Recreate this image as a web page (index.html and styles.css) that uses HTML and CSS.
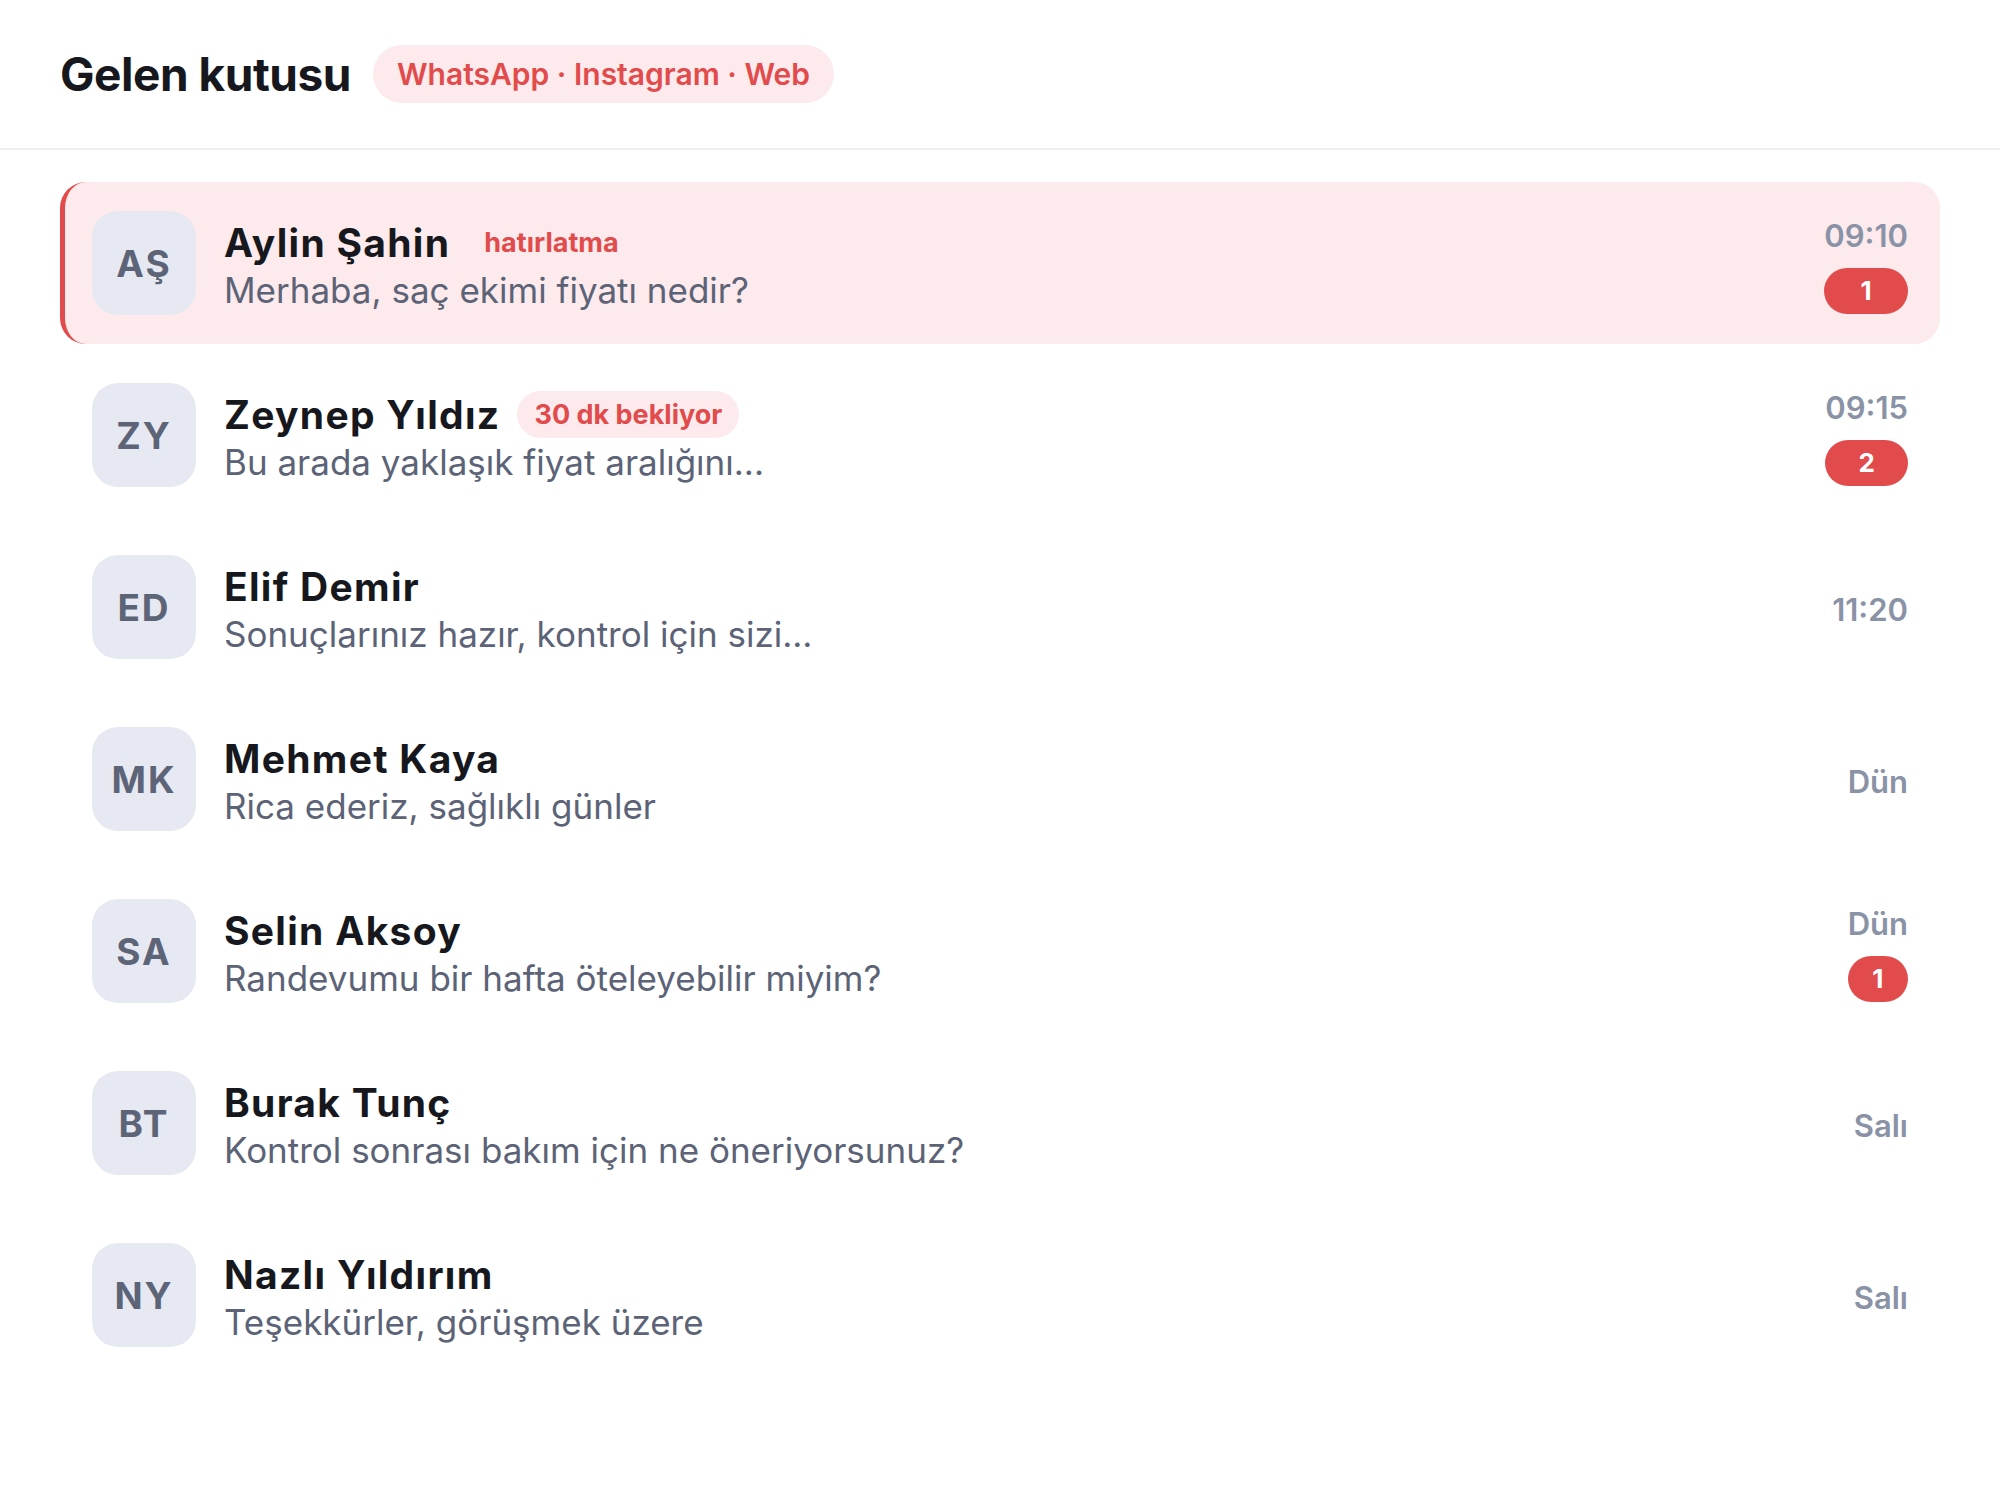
FILE: index.html
```html
<!DOCTYPE html>
<html lang="tr">
<head>
  <meta charset="UTF-8">
  <meta name="viewport" content="width=device-width, initial-scale=1.0">
  <title>Gelen kutusu</title>
  <link rel="stylesheet" href="styles.css">
</head>
<body>
  <header class="inbox-header">
    <h1>Gelen kutusu</h1>
    <span class="channels">WhatsApp · Instagram · Web</span>
  </header>

  <main class="thread-list">
    <div class="thread active">
      <div class="avatar">AŞ</div>
      <div class="thread-body">
        <div class="thread-title">
          <span class="name">Aylin Şahin</span>
          <span class="tag">hatırlatma</span>
        </div>
        <p class="preview">Merhaba, saç ekimi fiyatı nedir?</p>
      </div>
      <div class="thread-meta">
        <span class="time">09:10</span>
        <span class="unread">1</span>
      </div>
    </div>

    <div class="thread">
      <div class="avatar">ZY</div>
      <div class="thread-body">
        <div class="thread-title">
          <span class="name">Zeynep Yıldız</span>
          <span class="tag">30 dk bekliyor</span>
        </div>
        <p class="preview">Bu arada yaklaşık fiyat aralığını...</p>
      </div>
      <div class="thread-meta">
        <span class="time">09:15</span>
        <span class="unread">2</span>
      </div>
    </div>

    <div class="thread">
      <div class="avatar">ED</div>
      <div class="thread-body">
        <div class="thread-title">
          <span class="name">Elif Demir</span>
        </div>
        <p class="preview">Sonuçlarınız hazır, kontrol için sizi...</p>
      </div>
      <div class="thread-meta">
        <span class="time">11:20</span>
      </div>
    </div>

    <div class="thread">
      <div class="avatar">MK</div>
      <div class="thread-body">
        <div class="thread-title">
          <span class="name">Mehmet Kaya</span>
        </div>
        <p class="preview">Rica ederiz, sağlıklı günler</p>
      </div>
      <div class="thread-meta">
        <span class="time">Dün</span>
      </div>
    </div>

    <div class="thread">
      <div class="avatar">SA</div>
      <div class="thread-body">
        <div class="thread-title">
          <span class="name">Selin Aksoy</span>
        </div>
        <p class="preview">Randevumu bir hafta öteleyebilir miyim?</p>
      </div>
      <div class="thread-meta">
        <span class="time">Dün</span>
        <span class="unread">1</span>
      </div>
    </div>

    <div class="thread">
      <div class="avatar">BT</div>
      <div class="thread-body">
        <div class="thread-title">
          <span class="name">Burak Tunç</span>
        </div>
        <p class="preview">Kontrol sonrası bakım için ne öneriyorsunuz?</p>
      </div>
      <div class="thread-meta">
        <span class="time">Salı</span>
      </div>
    </div>

    <div class="thread">
      <div class="avatar">NY</div>
      <div class="thread-body">
        <div class="thread-title">
          <span class="name">Nazlı Yıldırım</span>
        </div>
        <p class="preview">Teşekkürler, görüşmek üzere</p>
      </div>
      <div class="thread-meta">
        <span class="time">Salı</span>
      </div>
    </div>
  </main>
</body>
</html>
```

FILE: styles.css
```css
* {
  margin: 0;
  padding: 0;
  box-sizing: border-box;
}

:root {
  --text-primary: #16181d;
  --text-secondary: #5c6377;
  --text-muted: #8a92a6;
  --accent: #e24b4b;
  --accent-soft: #fdeaec;
  --avatar-bg: #e6e9f1;
  --border: #eceef2;
}

body {
  font-family: Inter, 'Noto Sans', sans-serif;
  background-color: #ffffff;
  color: var(--text-primary);
}

.inbox-header {
  height: 150px;
  padding: 0 60px;
  display: flex;
  align-items: center;
  gap: 22px;
  border-bottom: 2px solid var(--border);
}

.inbox-header h1 {
  font-size: 46px;
  font-weight: 700;
  letter-spacing: -0.01em;
}

.channels {
  height: 58px;
  padding: 0 24px;
  display: inline-flex;
  align-items: center;
  border-radius: 29px;
  background-color: var(--accent-soft);
  color: var(--accent);
  font-size: 30px;
  font-weight: 600;
}

.thread-list {
  padding: 32px 60px;
  display: flex;
  flex-direction: column;
  gap: 10px;
}

.thread {
  display: flex;
  align-items: center;
  gap: 28px;
  padding: 29px 32px 29px 27px;
  border-left: 5px solid transparent;
  border-radius: 26px;
}

.thread.active {
  background-color: var(--accent-soft);
  border-left-color: var(--accent);
}

.avatar {
  width: 104px;
  height: 104px;
  flex-shrink: 0;
  display: flex;
  align-items: center;
  justify-content: center;
  border-radius: 26px;
  background-color: var(--avatar-bg);
  color: #5d6477;
  font-size: 37px;
  font-weight: 700;
  letter-spacing: 2px;
}

.thread-body {
  flex: 1;
  min-width: 0;
  padding-top: 6px;
}

.thread-title {
  display: flex;
  align-items: center;
  gap: 17px;
  height: 46px;
}

.name {
  font-size: 39px;
  font-weight: 700;
  letter-spacing: 1.3px;
}

.tag {
  height: 47px;
  padding: 0 17px;
  display: inline-flex;
  align-items: center;
  border-radius: 24px;
  background-color: var(--accent-soft);
  color: var(--accent);
  font-size: 27px;
  font-weight: 700;
}

.preview {
  margin-top: 2px;
  font-size: 35px;
  line-height: 46px;
  color: var(--text-secondary);
  white-space: nowrap;
  overflow: hidden;
  text-overflow: ellipsis;
}

.thread-meta {
  display: flex;
  flex-direction: column;
  gap: 14px;
  padding-top: 5px;
}

.time {
  text-align: right;
  font-size: 31px;
  line-height: 36px;
  font-weight: 600;
  color: var(--text-muted);
}

.unread {
  min-width: 60px;
  height: 46px;
  padding: 0 18px;
  border-radius: 23px;
  background-color: var(--accent);
  color: #ffffff;
  text-align: center;
  font-size: 26px;
  line-height: 46px;
  font-weight: 700;
}
```
